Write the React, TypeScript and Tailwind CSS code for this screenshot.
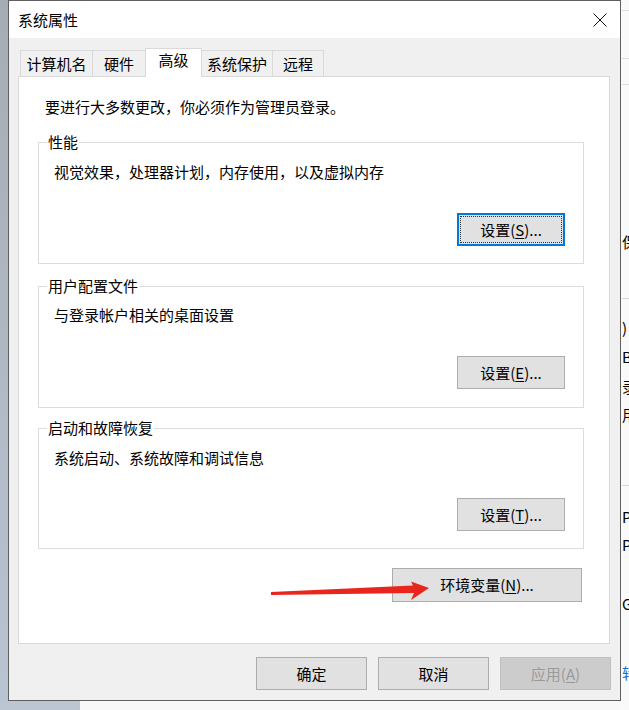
import React from 'react';

type BtnProps = {
  children: React.ReactNode;
  className?: string;
};

function WinButton({ children, className = '' }: BtnProps) {
  return (
    <button
      className={`flex items-center justify-center h-[33px] bg-[#e1e1e1] border border-[#adadad] leading-[20px] text-black ${className}`}
    >
      {children}
    </button>
  );
}

const tabs = [
  { label: '计算机名', w: 'w-[73px]', active: false },
  { label: '硬件', w: 'w-[54px]', active: false },
  { label: '高级', w: 'w-[57px]', active: true },
  { label: '系统保护', w: 'w-[72px]', active: false },
  { label: '远程', w: 'w-[52px]', active: false },
];

// fragments of the window behind the dialog, right edge
const behind = [
  { text: '保', cls: 'mt-[147px] h-[20px]' },
  { text: '', cls: 'mt-[46px] h-[1px] bg-[#d6d6d6]' },
  { text: ')', cls: 'mt-[19px] h-[20px]' },
  { text: 'B', cls: 'mt-[9px] h-[20px]' },
  { text: '录', cls: 'mt-[10px] h-[20px]' },
  { text: '用', cls: 'mt-[8px] h-[20px]' },
  { text: '', cls: 'mt-[60px] h-[1px] bg-[#d6d6d6]' },
  { text: 'P', cls: 'mt-[21px] h-[20px]' },
  { text: 'P', cls: 'mt-[8px] h-[20px]' },
  { text: 'G', cls: 'mt-[39px] h-[20px]' },
  { text: '转', cls: 'mt-[49px] h-[20px] text-[#1e6fc8]' },
];

export default function App() {
  return (
    <div className="relative flex w-[629px] h-[710px] overflow-hidden font-['Noto_Sans_CJK_SC',sans-serif] text-[15px] text-black">
      <div className="flex flex-col w-[621px]">
        <div className="flex h-[701px]">
          {/* desktop strip */}
          <div className="w-[8px] bg-linear-to-b from-[#a6acb3] to-[#b9c4d2]" />

          {/* dialog */}
          <div className="flex flex-col w-[613px] border border-[#5f5f5f] bg-[#f0f0f0]">
            <div className="flex items-center justify-between h-[37px] bg-white pl-[9px] pr-[13px]">
              <span className="leading-[20px]">系统属性</span>
              <svg width="14" height="14" viewBox="0 0 14 14">
                <path d="M0.5 0.5 L13.5 13.5 M13.5 0.5 L0.5 13.5" stroke="#111" strokeWidth="1" fill="none" />
              </svg>
            </div>

            <div className="flex flex-col flex-1 pt-[10px]">
              {/* tabs */}
              <div className="flex items-end h-[28px] pl-[11px]">
                {tabs.map((t, i) => (
                  <div
                    key={t.label}
                    className={`${t.w} ${i > 0 ? '-ml-px' : ''} flex justify-center border-x border-t border-[#d9d9d9] leading-[20px] ${
                      t.active
                        ? 'relative z-10 h-[29px] mb-[-1px] bg-white pt-[1px]'
                        : 'h-[26px] bg-[#f0f0f0] pt-[3px]'
                    }`}
                  >
                    {t.label}
                  </div>
                ))}
              </div>

              {/* panel */}
              <div className="flex flex-col ml-[9px] w-[592px] h-[568px] border border-[#d9d9d9] bg-white pt-[20px]">
                <p className="pl-[26px] leading-[20px]">要进行大多数更改，你必须作为管理员登录。</p>

                <fieldset className="flex flex-col mt-[15px] ml-[19px] w-[546px] border border-[#dcdcdc] pl-[15px] pr-[18px] pb-[17px]">
                  <legend className="-ml-[7px] px-[1px] leading-[20px]">性能</legend>
                  <div className="mt-[10px] leading-[20px]">视觉效果，处理器计划，内存使用，以及虚拟内存</div>
                  <button className="self-end flex items-center justify-center mt-[31px] w-[108px] h-[33px] bg-[#e1e1e1] border-2 border-[#0078d7] outline-1 outline-dotted outline-[#333] outline-offset-[-4px] leading-[20px]">
                    设置(<span className="underline underline-offset-2">S</span>)...
                  </button>
                </fieldset>

                <fieldset className="flex flex-col mt-[12px] ml-[19px] w-[546px] border border-[#dcdcdc] pl-[15px] pr-[18px] pb-[18px]">
                  <legend className="-ml-[7px] px-[1px] leading-[20px]">用户配置文件</legend>
                  <div className="mt-[9px] leading-[20px]">与登录帐户相关的桌面设置</div>
                  <WinButton className="self-end mt-[31px] w-[108px]">
                    设置(<span className="underline underline-offset-2">E</span>)...
                  </WinButton>
                </fieldset>

                <fieldset className="flex flex-col mt-[10px] ml-[19px] w-[546px] border border-[#dcdcdc] pl-[15px] pr-[18px] pb-[17px]">
                  <legend className="-ml-[7px] px-[1px] leading-[20px]">启动和故障恢复</legend>
                  <div className="mt-[10px] leading-[20px]">系统启动、系统故障和调试信息</div>
                  <WinButton className="self-end mt-[30px] w-[108px]">
                    设置(<span className="underline underline-offset-2">T</span>)...
                  </WinButton>
                </fieldset>

                <WinButton className="self-end mt-[19px] mr-[27px] w-[190px] h-[34px]">
                  环境变量(<span className="underline underline-offset-2">N</span>)...
                </WinButton>
              </div>

              {/* dialog buttons */}
              <div className="flex justify-end gap-[11px] mt-[13px] pr-[9px]">
                <WinButton className="w-[111px]">确定</WinButton>
                <WinButton className="w-[111px]">取消</WinButton>
                <button className="flex items-center justify-center w-[111px] h-[33px] bg-[#cccccc] border border-[#bfbfbf] text-[#9a9a9a] leading-[20px]">
                  应用(<span className="underline underline-offset-2">A</span>)
                </button>
              </div>
            </div>
          </div>
        </div>
        <div className="flex h-[9px]">
          <div className="w-[80px] bg-[#bcc6d3]" />
          <div className="flex-1 bg-[#f8f8f8]" />
        </div>
      </div>

      {/* window behind, right edge */}
      <div className="flex flex-col w-[8px] h-[710px] overflow-hidden bg-[#f9f9f9] pl-[1px] leading-[20px] whitespace-nowrap">
        <div className="mt-[10px] h-[1px] bg-[#dedede]" />
        <div className="mt-[47px] h-[1px] bg-[#dedede]" />
        <div className="mt-[25px] h-[1px] bg-[#dedede]" />
        {behind.map((b, i) => (
          <div key={i} className={b.cls}>
            {b.text}
          </div>
        ))}
      </div>

      {/* red annotation arrow */}
      <svg className="absolute left-[268px] top-[578px]" width="165" height="26" viewBox="0 0 165 26">
        <polygon points="3,14 145,7.5 143,3.5 161,10 143,22 146,15 3,17" fill="#e9261d" />
      </svg>
    </div>
  );
}
